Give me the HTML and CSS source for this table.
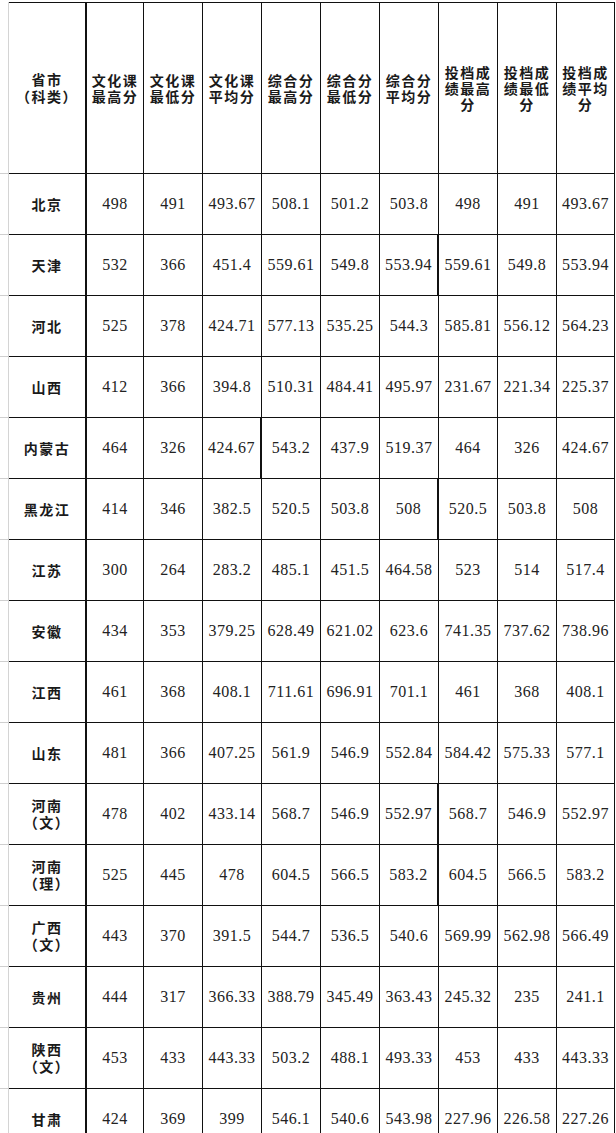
FILE: index.html
```html
<!DOCTYPE html>
<html lang="zh-CN">
<head>
<meta charset="utf-8">
<title>各省市录取分数统计</title>
<link rel="stylesheet" href="styles.css">
</head>
<body>
<div class="sheet">
  <div class="g hd"></div>
  <div class="c hd name">省市<br>（科类）</div>
  <div class="c hd">文化课最高分</div>
  <div class="c hd">文化课最低分</div>
  <div class="c hd">文化课平均分</div>
  <div class="c hd">综合分最高分</div>
  <div class="c hd">综合分最低分</div>
  <div class="c hd">综合分平均分</div>
  <div class="c hd">投档成绩最高分</div>
  <div class="c hd">投档成绩最低分</div>
  <div class="c hd">投档成绩平均分</div>

  <div class="g"></div><div class="c name">北京</div><div class="c n">498</div><div class="c n">491</div><div class="c n">493.67</div><div class="c n">508.1</div><div class="c n">501.2</div><div class="c n">503.8</div><div class="c n">498</div><div class="c n">491</div><div class="c n">493.67</div>
  <div class="g"></div><div class="c name">天津</div><div class="c n">532</div><div class="c n">366</div><div class="c n">451.4</div><div class="c n">559.61</div><div class="c n">549.8</div><div class="c n thick">553.94</div><div class="c n">559.61</div><div class="c n">549.8</div><div class="c n">553.94</div>
  <div class="g"></div><div class="c name">河北</div><div class="c n">525</div><div class="c n">378</div><div class="c n">424.71</div><div class="c n">577.13</div><div class="c n">535.25</div><div class="c n">544.3</div><div class="c n">585.81</div><div class="c n">556.12</div><div class="c n">564.23</div>
  <div class="g"></div><div class="c name">山西</div><div class="c n">412</div><div class="c n">366</div><div class="c n">394.8</div><div class="c n">510.31</div><div class="c n">484.41</div><div class="c n">495.97</div><div class="c n">231.67</div><div class="c n">221.34</div><div class="c n">225.37</div>
  <div class="g"></div><div class="c name">内蒙古</div><div class="c n">464</div><div class="c n">326</div><div class="c n thick">424.67</div><div class="c n">543.2</div><div class="c n">437.9</div><div class="c n">519.37</div><div class="c n">464</div><div class="c n">326</div><div class="c n">424.67</div>
  <div class="g"></div><div class="c name">黑龙江</div><div class="c n">414</div><div class="c n">346</div><div class="c n">382.5</div><div class="c n">520.5</div><div class="c n">503.8</div><div class="c n thick">508</div><div class="c n">520.5</div><div class="c n">503.8</div><div class="c n">508</div>
  <div class="g"></div><div class="c name">江苏</div><div class="c n">300</div><div class="c n">264</div><div class="c n">283.2</div><div class="c n">485.1</div><div class="c n">451.5</div><div class="c n">464.58</div><div class="c n">523</div><div class="c n">514</div><div class="c n">517.4</div>
  <div class="g"></div><div class="c name">安徽</div><div class="c n">434</div><div class="c n">353</div><div class="c n">379.25</div><div class="c n">628.49</div><div class="c n">621.02</div><div class="c n">623.6</div><div class="c n">741.35</div><div class="c n">737.62</div><div class="c n">738.96</div>
  <div class="g"></div><div class="c name">江西</div><div class="c n">461</div><div class="c n">368</div><div class="c n">408.1</div><div class="c n">711.61</div><div class="c n">696.91</div><div class="c n">701.1</div><div class="c n">461</div><div class="c n">368</div><div class="c n">408.1</div>
  <div class="g"></div><div class="c name">山东</div><div class="c n">481</div><div class="c n">366</div><div class="c n">407.25</div><div class="c n">561.9</div><div class="c n">546.9</div><div class="c n">552.84</div><div class="c n">584.42</div><div class="c n">575.33</div><div class="c n">577.1</div>
  <div class="g"></div><div class="c name">河南<br>（文）</div><div class="c n">478</div><div class="c n">402</div><div class="c n">433.14</div><div class="c n">568.7</div><div class="c n">546.9</div><div class="c n thick">552.97</div><div class="c n">568.7</div><div class="c n">546.9</div><div class="c n">552.97</div>
  <div class="g"></div><div class="c name">河南<br>（理）</div><div class="c n">525</div><div class="c n">445</div><div class="c n">478</div><div class="c n">604.5</div><div class="c n">566.5</div><div class="c n thick">583.2</div><div class="c n">604.5</div><div class="c n">566.5</div><div class="c n">583.2</div>
  <div class="g"></div><div class="c name">广西<br>（文）</div><div class="c n">443</div><div class="c n">370</div><div class="c n">391.5</div><div class="c n">544.7</div><div class="c n">536.5</div><div class="c n">540.6</div><div class="c n">569.99</div><div class="c n">562.98</div><div class="c n">566.49</div>
  <div class="g"></div><div class="c name">贵州</div><div class="c n">444</div><div class="c n">317</div><div class="c n">366.33</div><div class="c n">388.79</div><div class="c n">345.49</div><div class="c n">363.43</div><div class="c n">245.32</div><div class="c n">235</div><div class="c n">241.1</div>
  <div class="g"></div><div class="c name">陕西<br>（文）</div><div class="c n">453</div><div class="c n">433</div><div class="c n">443.33</div><div class="c n">503.2</div><div class="c n">488.1</div><div class="c n">493.33</div><div class="c n">453</div><div class="c n">433</div><div class="c n">443.33</div>
  <div class="g"></div><div class="c name">甘肃</div><div class="c n">424</div><div class="c n">369</div><div class="c n">399</div><div class="c n">546.1</div><div class="c n">540.6</div><div class="c n">543.98</div><div class="c n">227.96</div><div class="c n">226.58</div><div class="c n">227.26</div>
</div>
</body>
</html>
```
FILE: styles.css
```css
html, body {
  margin: 0;
  padding: 0;
  background: #fff;
  overflow: hidden;
}

.sheet {
  margin-top: 2px;
  display: grid;
  grid-template-columns: 9px 78px 57px repeat(7, 59px) 58px;
  grid-template-rows: 172px repeat(16, 61px);
  width: 615px;
}

.g {
  box-sizing: border-box;
  border-right: 1px solid #d4d4d4;
  border-bottom: 1px solid #cfcfcf;
}

.c {
  box-sizing: border-box;
  border-right: 1px solid #111;
  border-bottom: 1px solid #111;
  display: flex;
  align-items: center;
  justify-content: center;
  text-align: center;
  color: #1a1a1a;
}

.c.hd {
  border-top: 1px solid #111;
  padding: 0 4px;
  font-family: "Noto Sans CJK SC", "Noto Sans", sans-serif;
  font-weight: 700;
  font-size: 14px;
  line-height: 16px;
  letter-spacing: 1.5px;
}

.c.name {
  border-right-width: 2px;
  font-family: "Noto Sans CJK SC", "Noto Sans", sans-serif;
  font-weight: 700;
  font-size: 14px;
  line-height: 17px;
  letter-spacing: 1.5px;
}

.c.n {
  font-family: "Liberation Serif", "Noto Sans CJK SC", serif;
  font-size: 16px;
  letter-spacing: 0.5px;
  color: #222;
  white-space: nowrap;
}

.c.thick {
  border-right-width: 2px;
}
```
